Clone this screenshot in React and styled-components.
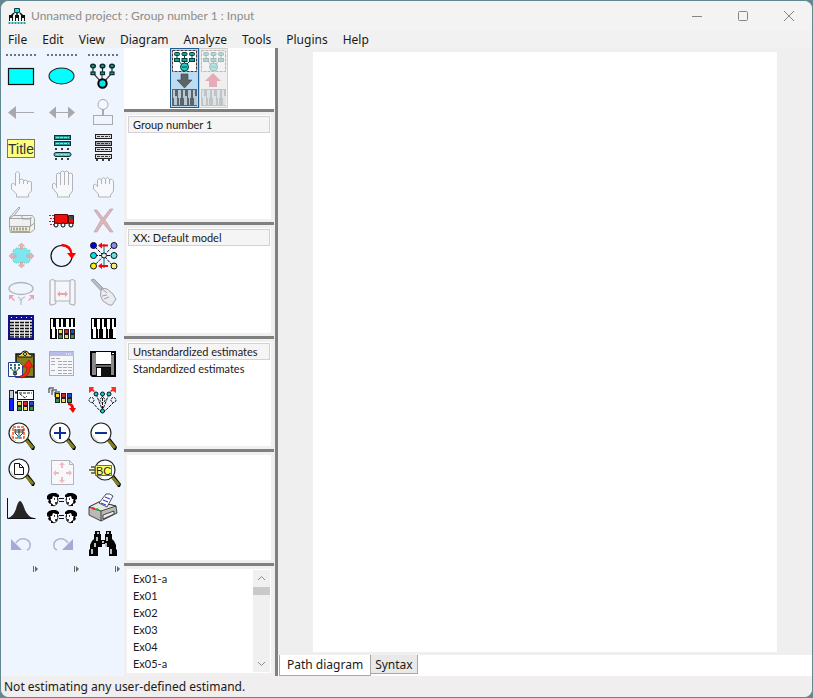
import { useState } from "react";
import styled, { createGlobalStyle } from "styled-components";

const GlobalStyle = createGlobalStyle`
  * {
    box-sizing: border-box;
  }
  body {
    margin: 0;
    background: #628791;
    font-family: "Noto Sans", "Open Sans", sans-serif;
    color: #1a1a1a;
  }
  button {
    font: inherit;
    color: inherit;
    background: none;
    border: 0;
    padding: 0;
  }
`;

const gray = "#a9a9ad";
const faint = "#b3b3b8";
const pink = "#f0a0ac";
const teal = "#1d9a98";

/* ---------- icons, all on a 32 x 32 grid ---------- */

const swatches = ["#f0e040", "#d02828", "#2848c8", "#2f9a3c", "#f0e040", "#2f9a3c"];

function Swatches({ x, y }) {
  return (
    <g stroke="#222">
      {swatches.map((c, i) => (
        <rect
          key={c + i}
          x={x + (i % 3) * 6 + 0.5}
          y={y + Math.floor(i / 3) * 5 + 0.5}
          width="4"
          height="4"
          fill={c}
        />
      ))}
    </g>
  );
}

function Keys({ x = 4, y = 6, h = 21, dark = "#000", light = "#fff" }) {
  const half = Math.floor(h / 2);
  return (
    <g shapeRendering="crispEdges">
      <rect x={x} y={y} width="25" height={h} fill={dark} />
      {[0, 1, 2, 3, 4].map((i) => (
        <g key={i} fill={light}>
          <rect x={x + 1 + i * 5} y={y + 1} width={i % 2 ? 3 : 2} height={half} />
          <rect x={x + 2 + i * 5} y={y + half - 1} width={i % 2 ? 1 : 3} height={h - half} />
        </g>
      ))}
    </g>
  );
}

function Lens({ cx = 14, cy = 13, children }) {
  return (
    <g>
      <path d={`M${cx + 6} ${cy + 7}l3-2 7 9-1 3h-2z`} fill="#000" />
      <path d={`M${cx + 7} ${cy + 7}l7 8`} stroke="#85801f" strokeWidth="3" />
      <circle cx={cx} cy={cy} r="10" fill="#fff" stroke="#222" strokeWidth="1.2" />
      <path d={`M${cx - 8} ${cy + 2}a8 8 0 0 0 5 6`} fill="none" stroke="#c8c8c8" />
      {children}
    </g>
  );
}

function Model() {
  return (
    <g stroke="#0a2e2e" strokeWidth="1.2" fill={teal}>
      <path d="M6 13L15 23M15 13v10M25 13L16 23" fill="none" stroke="#444" />
      {[6, 15.5, 25].map((cx) => (
        <g key={cx}>
          <path d={`M${cx} 6v8`} />
          <ellipse cx={cx} cy="6" rx="2.3" ry="1.8" strokeWidth="1.5" />
          <rect x={cx - 2} y="12" width="4" height="2.6" />
        </g>
      ))}
    </g>
  );
}

function Head({ x, y, flip }) {
  return (
    <g transform={flip ? `translate(${x + 12} ${y}) scale(-1 1)` : `translate(${x} ${y})`}>
      <path d="M3 3h7l1 5-1 4-3 2-4-3z" fill="#fff" stroke="#000" strokeWidth=".8" />
      <path d="M0 4l2-2 3-1h4l3 2v2H9L6 4 5 7H3l1 3-1 2-2-2 1-2-2-1z" fill="#000" />
      <path d="M7 7h1M10 7h1M8 11h2" stroke="#000" strokeWidth="1.4" />
      <path d="M4 11l3 3H4z" fill="#000" />
    </g>
  );
}

const icons = {
  Observed: (
    <rect x="3.5" y="8.5" width="25" height="16" fill="#00ffff" stroke="#111" strokeWidth="1.2" />
  ),
  Unobserved: (
    <ellipse cx="15.5" cy="16" rx="12.5" ry="8" fill="#00ffff" stroke="#222" strokeWidth="1.1" />
  ),
  "Latent variable": (
    <g>
      <Model />
      <circle cx="15.5" cy="23.5" r="4.2" fill="#00e5e5" stroke="#000" strokeWidth="2" />
    </g>
  ),
  Path: <path d="M3 16.5l8-6.5v13zM11 16h18v1H11z" fill={gray} />,
  Covariance: <path d="M3 16.5l7-6v12zM29 16.5l-7-6v12zM10 16h12v1H10z" fill={gray} />,
  "Unique variable": (
    <g fill="none" stroke={gray}>
      <circle cx="16" cy="8.5" r="5" fill="#f4f8fe" />
      <path d="M16 13.5v6" strokeWidth="2" />
      <rect x="6.5" y="19.5" width="19" height="9" />
    </g>
  ),
  Title: (
    <g>
      <rect x="2.5" y="7.5" width="27" height="18" fill="#ffff80" stroke="#77775a" />
      <text x="3" y="22" fontSize="14" fontFamily="Liberation Sans, sans-serif" fill="#333">
        Title
      </text>
    </g>
  ),
  "List variables in model": (
    <g stroke="#06383a" fill={teal}>
      <rect x="8.5" y="3.5" width="16" height="4" />
      <rect x="8.5" y="9.5" width="16" height="4" />
      <rect x="8" y="20.5" width="17" height="4" rx="2" fill="#40c8c4" />
      <path d="M10 5.5h13M10 11.5h13M10 22.5h13" stroke="#9adcd8" strokeDasharray="3 1" />
      <path d="M9 17h2m4 0h2m4 0h2M9 27h2m4 0h2m4 0h2" stroke="#000" strokeWidth="1.4" />
    </g>
  ),
  "List variables in data set": (
    <g stroke="#222" fill="#ddd">
      <rect x="8.5" y="2.5" width="16" height="4" />
      <rect x="8.5" y="9.5" width="16" height="4" fill="#aaa" />
      <rect x="8.5" y="15.5" width="16" height="4" />
      <rect x="8.5" y="22.5" width="16" height="4" />
      <path d="M10 4.5h13M10 11.5h13M10 17.5h13M10 24.5h13" stroke="#333" strokeDasharray="3 1" />
      <path d="M9 28h2m4 0h2m4 0h2" stroke="#000" strokeWidth="1.4" />
    </g>
  ),
  "Select one": (
    <path
      d="M10.5 18V5q2-3 4 0v11-4q2-2 4 0v4-3q2-2 4 0v3-2q2-2 4 0v9l-3 3v3h-12v-3l-5-5v-5q2-2 4 1z"
      fill="#f6f8fb"
      stroke={faint}
    />
  ),
  "Select all": (
    <path
      d="M10.5 20V6q2-2 4 0v11V4q2-2 4 0v13V4q2-2 4 0v13V6q2-2 4 0v17l-3 4v2h-12v-3l-5-6v-4q2-2 4 1z"
      fill="#f6f8fb"
      stroke={faint}
    />
  ),
  Deselect: (
    <path
      d="M10.5 19v-7q2-3 4 0v4-5q2-3 4 0v5-5q2-3 4 0v5-4q2-2 4 1v10l-3 4v2h-12v-3l-5-5v-4q2-2 4 1z"
      fill="#f6f8fb"
      stroke={faint}
    />
  ),
  Duplicate: (
    <g fill="#eff0ef" stroke="#a5a5a5">
      <path d="M4 14L14 3l1 1L7 14z" />
      <path d="M4.5 14.5l4-3h19l2 3v11l-4 3h-20l-1-5z" />
      <path d="M4.5 14.5h21v8h-21M25.5 22l4-3M17 12v3h9v-2" fill="none" />
      <path d="M6.5 22.5h18v5h-18z" fill="#f3f0c0" />
      <path d="M8 25h15" strokeWidth="3" strokeDasharray="2 1" />
    </g>
  ),
  Move: (
    <g>
      <path d="M3 11.5h5M4 14.5h4M3 17.5h5M4 20.5h4" stroke="#c02020" strokeDasharray="2 1" />
      <path d="M8.5 10.5h13v9h-13zM22.5 11.5h5v8h-5z" fill="#f20d0d" stroke="#600" />
      <path d="M24 12h3v3h-3z" fill="#444" />
      <g fill="#fff" stroke="#000">
        <circle cx="10" cy="21" r="2" />
        <circle cx="17" cy="21" r="2" />
        <circle cx="25" cy="21" r="2" />
      </g>
    </g>
  ),
  Erase: (
    <path
      d="M7 6h3l6 8 7-9h3l-8 11 8 12h-3l-7-9-6 9H7l7-12z"
      fill="#dcb4bc"
      stroke="#bda5b0"
      strokeWidth=".7"
    />
  ),
  Reshape: (
    <g>
      <path d="M8 10l3-1V8h10l1 2h3v11l-2 2H10l-2-2z" fill="#7fe6ef" stroke="#5cc" strokeDasharray="1 1" />
      <path
        d="M16.5 3l3 3h-2v3h-2V6h-2zM16.5 28l3-3h-2v-3h-2v3h-2zM4 16l3-3v2h4v2H7v2zM29 16l-3-3v2h-4v2h4v2z"
        fill="#f4b3bb"
        stroke="#c98"
        strokeWidth=".6"
      />
    </g>
  ),
  Rotate: (
    <g fill="none">
      <circle cx="15.5" cy="16" r="10.5" stroke="#111" strokeWidth="1.2" />
      <path d="M15.5 5q9 0 10 9" stroke="#f00" strokeWidth="2.4" />
      <path d="M21 13h9l-4 6z" fill="#f00" />
    </g>
  ),
  Reflect: (
    <g stroke="#111">
      <path d="M8 7l7 7M25 7L8 25M18 17l7 8M8 15.5h17" fill="none" strokeDasharray="3 1" />
      <path d="M17 4v24" stroke="#007078" />
      <circle cx="6.5" cy="5.5" r="3" fill="#0000d0" />
      <circle cx="27" cy="5.5" r="3" fill="#8c8cf0" />
      <circle cx="6.5" cy="15.5" r="3" fill="#00e5e5" />
      <circle cx="27" cy="15.5" r="3" fill="#60e5e5" />
      <circle cx="6.5" cy="26" r="3" fill="#f5f500" />
      <circle cx="27" cy="26" r="3" fill="#f0f080" />
      <circle cx="17" cy="15.5" r="2.5" fill="#d7eef4" />
      <path d="M11 5.5l4-3v2h6v2h-6v2zM11 26l4-3v2h6v2h-6v2z" fill="#f00" stroke="none" />
    </g>
  ),
  "Move parameter": (
    <g fill="none" stroke={faint}>
      <ellipse cx="16" cy="12.5" rx="12" ry="6" strokeWidth="1.3" />
      <path d="M13 21q2 0 3 4 1-4 4-4M16 25v4" />
      <path d="M4 24v-5h5l-2 2 3 3-1 1-3-3zM29 24v-5h-5l2 2-3 3 1 1 3-3z" fill={pink} stroke="none" />
    </g>
  ),
  Reposition: (
    <g fill="#f4f6fa" stroke={faint} strokeWidth="1.2">
      <path d="M7 5h19v20H7z" />
      <path d="M4 5q2-3 5 0v20q2 1 0 3l-4 1q-2-1-1-4zM24 5q2-3 5 0v20q1 2-1 4l-4-1q-1-2 0-3z" />
      <path d="M11 18l3-3v2h5v-2l3 3-3 3v-2h-5v2z" fill={pink} stroke="none" />
    </g>
  ),
  "Touch up": (
    <g fill="#ececf0" stroke="#a0a0a6">
      <path d="M4 4l3-1 12 12-2 3z" fill="#bcbcc0" />
      <path d="M14 14q3-3 6-1l6 5q2 4 3 5l-4 6h-3l-6-4q-4-5-2-11z" />
      <path d="M15 20l5-1M17 23l5-2M14 12l6 5" fill="none" />
    </g>
  ),
  "Data files": (
    <g>
      <rect x="4" y="4" width="24" height="23" fill="#e8e8e8" stroke="#101080" strokeWidth="2" />
      <path d="M3 6h26" stroke="#101090" strokeWidth="4" />
      <path d="M6 5.5h21" stroke="#fff" strokeDasharray="1 4" />
      <path
        d="M5 10.5h22M5 13.5h22M5 16.5h22M5 19.5h22M5 22.5h22M5 25h22"
        stroke="#111"
        strokeWidth="1.5"
        strokeDasharray="4 1"
      />
    </g>
  ),
  "Analysis properties": (
    <g>
      <Keys />
      <rect x="11" y="15" width="19" height="12" fill="#fff" />
      <Swatches x={12} y={17} />
    </g>
  ),
  "Calculate estimates": <Keys />,
  "Copy diagram": (
    <g stroke="#111">
      <rect x="11" y="6" width="18" height="23" fill="#85801f" strokeWidth="1.5" />
      <path d="M13 9h14V7l-3-1q-1-3-4-3t-4 3l-3 1z" fill="#e8cf40" />
      <circle cx="20" cy="6" r="1.5" fill="#fff" />
      <path d="M3.5 14.5h11l3 3v11h-14z" fill="#fff" stroke="#2a3a90" />
      <path d="M6 20l4 5 4-5M10 18v7" fill="none" stroke="#333" />
      <path d="M5 17h2m2 0h2m2 0h2M5 20h2m2 0h2m2 0h2" stroke="#157a80" strokeWidth="2" />
      <circle cx="10" cy="25.5" r="1.6" fill="#1aa0b0" />
      <path d="M15 28q7-1 7-9h-4l6-7 4 7h-3q0 10-9 11z" fill="#f42a10" stroke="#a00" strokeWidth=".6" />
    </g>
  ),
  "View text": (
    <g>
      <rect x="3.5" y="3.5" width="24" height="24" fill="#f5f7fb" stroke="#a9acd4" />
      <path d="M4 6h24" stroke="#b9bce6" strokeWidth="4" />
      <path d="M20 6h6" stroke="#fff" strokeDasharray="1 1" />
      <path
        d="M5 10.5h9M5 13.5h5M12 13.5h14M12 16.5h14M5 16.5h5M12 19.5h14M5 22.5h4M12 22.5h14M12 25.5h14"
        stroke="#a8abb4"
        strokeDasharray="4 1"
      />
    </g>
  ),
  Save: (
    <g>
      <path d="M3 3h26v26H5l-2-2z" fill="#050505" />
      <path d="M5 5h4v22H5zM24 7h3v20h-3z" fill="#8a8a8a" />
      <rect x="9" y="4" width="15" height="12" fill="#fff" />
      <path d="M8 17h16v2H8z" fill="#666" />
      <rect x="9" y="20" width="14" height="9" fill="#111" />
      <rect x="10" y="20" width="4" height="8" fill="#fff" />
      <path d="M25 5h2v1h-2z" fill="#fff" />
    </g>
  ),
  "Object properties": (
    <g>
      <rect x="4.5" y="6.5" width="4" height="10" fill="#ccc" stroke="#222" />
      <rect x="4.5" y="14.5" width="4" height="12" fill="#1020ff" stroke="#001060" />
      <path d="M10 8.5h2" stroke="#111" strokeWidth="2" />
      <rect x="12.5" y="6.5" width="16" height="9" fill="#fff" stroke="#111" />
      <path d="M14 9h13M15 10l5 4 2-2" stroke="#222" fill="none" strokeDasharray="3 1" />
      <Swatches x={12} y={17} />
    </g>
  ),
  "Drag properties": (
    <g>
      <path d="M3 9V4h5M6 11V6h5M9 13V8h5" fill="none" stroke="#222" />
      <path d="M3 4l6 5" stroke="#666" strokeDasharray="1 1" />
      <Swatches x={9} y={9} />
      <path d="M22 19h2q4 1 4 5h2l-3 5-4-5h2q0-3-3-3z" fill="#f00" />
    </g>
  ),
  "Preserve symmetries": (
    <g stroke="#111">
      <path d="M9 10l6 15M15.5 10v15M22 10l-6 15M5 18l9 10M27 18l-10 10" fill="none" strokeDasharray="3 1" />
      <g fill="none" strokeDasharray="2 1">
        <circle cx="4.5" cy="16" r="2.5" />
        <circle cx="15.5" cy="16" r="2.5" />
        <circle cx="26.5" cy="16" r="2.5" />
      </g>
      <g fill="#00d8d8">
        <circle cx="9" cy="10" r="2" />
        <circle cx="15.5" cy="10" r="2" />
        <circle cx="22" cy="10" r="2" />
        <circle cx="15.5" cy="27" r="2" />
      </g>
      <path
        d="M2 3h5l-1 2 2 2-1 1-2-1-3 2V7zM29 3h-5l1 2-2 2 1 1 2-1 3 2V7z"
        fill="#ff3020"
        stroke="none"
      />
    </g>
  ),
  "Zoom selection": (
    <Lens>
      <rect x="8" y="7" width="11" height="11" fill="#fff" stroke="#f05a20" strokeWidth="1.5" strokeDasharray="3 1" />
      <path d="M10 9v4l4 4 4-4V9M14 9v6M10 10h8M10 12h8" fill="none" stroke="#333" />
      <circle cx="14" cy="17" r="1.7" fill="#20b0b0" />
    </Lens>
  ),
  "Zoom in": (
    <Lens>
      <path d="M14 7v12M8 13h12" stroke="#0b2f96" strokeWidth="2" />
    </Lens>
  ),
  "Zoom out": (
    <Lens>
      <path d="M8 13h12" stroke="#0b2f96" strokeWidth="2" />
    </Lens>
  ),
  "Zoom page": (
    <Lens>
      <path d="M9.5 7.5h5l4 4v7h-9zM14.5 7.5v4h4" fill="#fff" stroke="#111" />
    </Lens>
  ),
  "Resize to page": (
    <g>
      <path d="M5.5 4.5h18l4 4v20h-22zM23.5 4.5v4h4" fill="#f6f8fb" stroke="#b4b4b8" />
      <path
        d="M16 6l3 3h-2v3h-2V9h-2zM16 27l3-3h-2v-3h-2v3h-2zM7 17l3-3v2h3v2h-3v2zM26 17l-3-3v2h-3v2h3v2z"
        fill="#f4b6c0"
      />
    </g>
  ),
  Loupe: (
    <g>
      <Lens cx={18} cy={14} />
      <path d="M2 14h7M4 11h5M4 17h5" stroke="#55551a" strokeWidth="1.5" />
      <path d="M8.5 9.5h16v10h-16z" fill="#ffff66" stroke="#77751c" />
      <text x="9" y="19" fontSize="11" fontFamily="Liberation Sans, sans-serif" fill="#222">
        BC
      </text>
    </g>
  ),
  "Bayesian estimation": (
    <g>
      <path d="M2.5 6v20.5h28" fill="none" stroke="#111" />
      <path d="M3 26q5-1 8-9 2-8 4-8t5 9q3 7 9 8z" fill="#262626" />
    </g>
  ),
  "Multiple groups": (
    <g>
      <Head x={1} y={0} />
      <Head x={19} y={0} flip />
      <Head x={1} y={17} />
      <Head x={19} y={17} flip />
      <path d="M13 6.5h5M13 9.5h5M13 23.5h5M13 26.5h5" stroke="#111" />
    </g>
  ),
  Print: (
    <g stroke="#222" strokeWidth=".8">
      <path d="M2 15l10-5 17 4 1 7-16 8-12-6z" fill="#b9bab6" />
      <path d="M2 15l12 4 15-5-17-4z" fill="#e9e9e4" />
      <path d="M14 19v10" />
      <path d="M16 23l11-4v3l-11 5z" fill="#eee" />
      <path d="M12 11l7-9q4-1 7 2l-6 11z" fill="#fff" />
      <path d="M18 5l5 2M16 8l5 2M14 11l5 2" stroke="#3344d0" strokeWidth="1.3" />
      <path d="M5 16l3 1" stroke="#d22" strokeWidth="2" />
      <path d="M9 17l3 1" stroke="#2a4" strokeWidth="2" />
    </g>
  ),
  Undo: (
    <g>
      <path d="M11 15q3-5 9-4 6 2 5 7 0 3-3 4" fill="none" stroke="#b5b5d6" strokeWidth="1.5" />
      <path d="M6 11v11h11z" fill="#a9a9d8" />
    </g>
  ),
  Redo: (
    <g>
      <path d="M22 15q-3-5-9-4-6 2-5 7 0 3 3 4" fill="none" stroke="#b5b5d6" strokeWidth="1.5" />
      <path d="M27 11v11H16z" fill="#a9a9d8" />
    </g>
  ),
  Search: (
    <g>
      <path
        d="M8 3h5v3h1v6h4V6h1V3h5v3h1v5l2 2 2 4v4l1 1v6h-8v-9h-4v-3h-3v3h-4v9H2v-6l1-1v-4l2-4 2-2V6h1z"
        fill="#050505"
      />
      <path
        d="M10 5h2M20 5h2M10 9v4M20 9v4M8 15v4M19 15v4M5 21v5M24 21v5M15 14h2"
        stroke="#fff"
        strokeWidth="1.5"
      />
    </g>
  ),
};

function AppIcon() {
  return (
    <svg width="18" height="18" viewBox="0 0 18 18" aria-hidden="true">
      <path d="M9 5v4M6 6L3 9M12 6l3 3" stroke="#111" strokeWidth="1.5" fill="none" />
      <path d="M6.5 1.5h5v4h-5z" fill="#1de0dc" stroke="#0a4444" />
      {[3, 9, 15].map((x) => (
        <g key={x}>
          <rect x={x - 2} y="8" width="4" height="3" fill="#111" />
          <path d={`M${x - 1.5} 10v4M${x + 1.5} 10v4`} stroke="#111" />
          <path d={`M${x - 2.5} 16h2m1 0h2`} stroke="#13a5a0" strokeWidth="2" />
        </g>
      ))}
    </svg>
  );
}

function ModeIcon({ up }) {
  return (
    <svg width="27" height="58" viewBox="0 0 27 58" opacity={up ? 0.3 : 1} aria-hidden="true">
      <rect x="1.5" y="1.5" width="24" height="21" fill="#fff" stroke="#533" strokeDasharray="3 1" />
      <g fill="#12a6a0" stroke="#0a3a3a">
        <path d="M6 10l7 8 8-8M13.5 6v12" fill="none" />
        {[6, 13.5, 21].map((x) => (
          <g key={x}>
            <rect x={x - 2.5} y="3.5" width="5" height="3" rx="1" />
            <rect x={x - 2.5} y="9.5" width="5" height="3" />
            <path d={`M${x} 6v3`} />
          </g>
        ))}
        <circle cx="13.5" cy="18" r="4" fill="#1cd2c4" />
        <path d="M11 18h5" />
      </g>
      {up ? (
        <path d="M13 24l8 8h-4v6H9v-6H5z" fill="#d0103c" />
      ) : (
        <path d="M10 25h7v6h4l-7.5 8L6 31h4z" fill="#5d6264" stroke="#444" strokeWidth=".6" />
      )}
      <Keys x={1} y={40} h={17} dark="#5b656c" light="#b9c8d2" />
    </svg>
  );
}

/* ---------- page ---------- */

const menus = ["File", "Edit", "View", "Diagram", "Analyze", "Tools", "Plugins", "Help"];
const examples = ["Ex01-a", "Ex01", "Ex02", "Ex03", "Ex04", "Ex05-a"];

function ListPane({ items, selected, children }) {
  const [current, setCurrent] = useState(selected);
  return (
    <Pane>
      <ListBox>
        <Items>
          {items.map((item) => (
            <li key={item}>
              <Item $on={item === current} onClick={() => setCurrent(item)}>
                {item}
              </Item>
            </li>
          ))}
        </Items>
        {children}
      </ListBox>
    </Pane>
  );
}

export default function App() {
  const [mode, setMode] = useState("input");
  const [tab, setTab] = useState("Path diagram");

  return (
    <>
      <GlobalStyle />
      <Window>
        <TitleBar>
          <AppIcon />
          <Caption>Unnamed project : Group number 1 : Input</Caption>
          <WindowButton aria-label="Minimize">
            <svg width="12" height="12" viewBox="0 0 12 12"><path d="M1 6.5h10" /></svg>
          </WindowButton>
          <WindowButton aria-label="Maximize">
            <svg width="12" height="12" viewBox="0 0 12 12"><rect x="1.5" y="1.5" width="9" height="9" rx="1" /></svg>
          </WindowButton>
          <WindowButton aria-label="Close">
            <svg width="12" height="12" viewBox="0 0 12 12"><path d="M1 1l10 10M11 1L1 11" /></svg>
          </WindowButton>
        </TitleBar>

        <MenuBar>
          {menus.map((m) => (
            <MenuItem key={m}>{m}</MenuItem>
          ))}
        </MenuBar>

        <Body>
          <Toolbox>
            {[0, 1, 2].map((i) => (
              <Grip key={i} />
            ))}
            {Object.entries(icons).map(([name, icon]) => (
              <Tool key={name} aria-label={name}>
                <svg width="32" height="32" viewBox="0 0 32 32">{icon}</svg>
              </Tool>
            ))}
            {[0, 1, 2].map((i) => (
              <More key={i} aria-label="More tools">
                <svg width="7" height="8" viewBox="0 0 7 8">
                  <path d="M1.5 1v6" stroke="#666" />
                  <path d="M3 1l3 3-3 3z" fill="#666" />
                </svg>
              </More>
            ))}
          </Toolbox>

          <Side>
            <Modes>
              <Mode $on={mode === "input"} aria-label="View the input path diagram" onClick={() => setMode("input")}>
                <ModeIcon />
              </Mode>
              <Mode $on={mode === "output"} aria-label="View the output path diagram" onClick={() => setMode("output")}>
                <ModeIcon up />
              </Mode>
            </Modes>
            <ListPane items={["Group number 1"]} selected="Group number 1" />
            <ListPane items={["XX: Default model"]} selected="XX: Default model" />
            <ListPane
              items={["Unstandardized estimates", "Standardized estimates"]}
              selected="Unstandardized estimates"
            />
            <ListPane items={[]} />
            <ListPane items={examples}>
              <ScrollTrack>
                <ScrollButton aria-label="Scroll up">
                  <svg width="9" height="6" viewBox="0 0 9 6"><path d="M1 5l3.5-3.5L8 5" /></svg>
                </ScrollButton>
                <ScrollThumb />
                <ScrollButton aria-label="Scroll down">
                  <svg width="9" height="6" viewBox="0 0 9 6"><path d="M1 1l3.5 3.5L8 1" /></svg>
                </ScrollButton>
              </ScrollTrack>
            </ListPane>
          </Side>

          <Main>
            <Canvas>
              <Sheet />
            </Canvas>
            <Tabs role="tablist">
              {["Path diagram", "Syntax"].map((t) => (
                <Tab key={t} role="tab" aria-selected={tab === t} $on={tab === t} onClick={() => setTab(t)}>
                  {t}
                </Tab>
              ))}
            </Tabs>
          </Main>
        </Body>

        <Status>Not estimating any user-defined estimand.</Status>
      </Window>
    </>
  );
}

const Window = styled.div`
  display: flex;
  flex-direction: column;
  height: 100vh;
  min-height: 660px;
  border: 1px solid #628791;
  border-radius: 9px;
  overflow: hidden;
  background: #f0eeee;
`;

const TitleBar = styled.header`
  display: flex;
  align-items: center;
  height: 29px;
  padding-left: 7px;
  background: #f3f3f3;
`;

const Caption = styled.h1`
  flex: 1;
  margin: 0 0 0 5px;
  font-family: Lato, sans-serif;
  font-size: 12px;
  font-weight: 400;
  line-height: 16px;
  color: #8c8c8c;
`;

const WindowButton = styled.button`
  display: flex;
  align-items: center;
  justify-content: center;
  width: 46px;
  height: 28px;
  svg {
    fill: none;
    stroke: #858585;
  }
`;

const MenuBar = styled.nav`
  display: flex;
  gap: 1px;
  height: 18px;
  background: #f1f1f1;
`;

const MenuItem = styled.button`
  padding: 0 7px;
  font-size: 12px;
  line-height: 20px;
`;

const Body = styled.div`
  flex: 1;
  display: flex;
  min-height: 0;
`;

const Toolbox = styled.div`
  display: grid;
  grid-template-columns: repeat(3, 41px);
  grid-template-rows: 10px;
  grid-auto-rows: 36px;
  align-content: start;
  width: 123px;
  background: #eef5ff;
`;

const Grip = styled.span`
  width: 30px;
  height: 2px;
  margin: 6px 0 0 5px;
  background: repeating-linear-gradient(90deg, #6d737c 0 2px, transparent 2px 4px);
`;

const Tool = styled.button`
  display: flex;
  align-items: center;
  padding-left: 4px;
  svg {
    flex: none;
    overflow: visible;
  }
`;

const More = styled.button`
  display: flex;
  justify-content: flex-end;
  align-items: flex-start;
  height: 16px;
  padding: 3px 3px 0 0;
`;

const Side = styled.aside`
  display: flex;
  flex-direction: column;
  width: 154px;
  border-right: 3px solid #808080;
`;

const Modes = styled.div`
  display: flex;
  justify-content: center;
  height: 61px;
  padding-right: 1px;
  background: #fff;
`;

const Mode = styled.button`
  width: 29px;
  height: 60px;
  background: ${({ $on }) => ($on ? "#bcdcf4" : "#efefef")};
  border: 1px solid ${({ $on }) => ($on ? "#1b5f95" : "#cfcfcf")};
  svg {
    display: block;
  }
`;

const Pane = styled.section`
  flex: 1;
  display: flex;
  min-height: 0;
  margin-right: 1px;
  padding: 3px;
  border-top: 3px solid #808080;
  background: #f0f0f0;
`;

const ListBox = styled.div`
  flex: 1;
  display: flex;
  padding: 1px;
  background: #fff;
  overflow: hidden;
`;

const Items = styled.ul`
  flex: 1;
  margin: 0;
  padding: 0;
  list-style: none;
`;

const Item = styled.button`
  display: block;
  width: 100%;
  padding-left: 4px;
  border: 1px solid ${({ $on }) => ($on ? "#d2d2d2" : "transparent")};
  background: ${({ $on }) => ($on ? "#f5f5f5" : "transparent")};
  font-family: Lato, sans-serif;
  font-size: 11px;
  line-height: 15px;
  text-align: left;
`;

const ScrollTrack = styled.div`
  display: flex;
  flex-direction: column;
  width: 17px;
  background: #f0f0f0;
`;

const ScrollButton = styled.button`
  display: flex;
  align-items: center;
  justify-content: center;
  height: 17px;
  svg {
    fill: none;
    stroke: #8a8a8a;
  }
  &:last-child {
    margin-top: auto;
  }
`;

const ScrollThumb = styled.span`
  height: 8px;
  background: #c9c9c9;
`;

const Main = styled.main`
  flex: 1;
  display: flex;
  flex-direction: column;
  min-width: 0;
`;

const Canvas = styled.div`
  flex: 1;
  display: flex;
  padding: 4px 35px 3px;
  background: #efefef;
`;

const Sheet = styled.div`
  flex: 1;
  background: #fff;
`;

const Tabs = styled.div`
  display: flex;
  align-items: flex-start;
  height: 21px;
  padding-left: 1px;
  background: #fff;
`;

const Tab = styled.button`
  height: ${({ $on }) => ($on ? "21px" : "19px")};
  padding: 0 ${({ $on }) => ($on ? "7px" : "4px")};
  border: solid #a8a8a8;
  border-width: 0 1px 1px ${({ $on }) => ($on ? "1px" : "0")};
  background: ${({ $on }) => ($on ? "#fff" : "#e9e9e9")};
  font-size: 12px;
  line-height: 20px;
`;

const Status = styled.footer`
  height: 21px;
  padding-left: 3px;
  background: #f0eeee;
  font-size: 12px;
  line-height: 21px;
`;
